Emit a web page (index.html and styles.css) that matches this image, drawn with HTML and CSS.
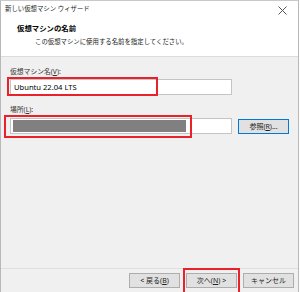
FILE: index.html
```html
<!DOCTYPE html>
<html lang="ja">
<head>
<meta charset="UTF-8" />
<title>新しい仮想マシン ウィザード</title>
<link rel="stylesheet" href="styles.css">
</head>
<body>
<div class="window">
  <!-- ------ HEADER (white) ------ -->
  <header class="header">
    <div class="titlebar">
      <span class="title">新しい仮想マシン ウィザード</span>
      <svg class="close" width="9" height="9" viewBox="0 0 9 9">
        <path d="M0.5 0.5 L8.5 8.5 M8.5 0.5 L0.5 8.5" stroke="#555" stroke-width="1" fill="none"/>
      </svg>
    </div>
    <h1 class="heading">仮想マシンの名前</h1>
    <p class="sub">この仮想マシンに使用する名前を指定してください。</p>
  </header>

  <!-- ------ FORM ------ -->
  <main class="content">
    <label class="label">仮想マシン名(<u>V</u>):</label>
    <div class="field">
      <div class="input">Ubuntu 22.04 LTS</div>
      <span class="mark mark-name"></span>
    </div>

    <label class="label label-loc">場所(<u>L</u>):</label>
    <div class="field row">
      <div class="input input-loc"><span class="redact"></span></div>
      <button class="btn btn-focus">参照(<u>R</u>)...</button>
      <span class="mark mark-loc"></span>
    </div>
  </main>

  <!-- ------ FOOTER BUTTONS ------ -->
  <footer class="footer">
    <button class="btn">&lt; 戻る(<u>B</u>)</button>
    <div class="field">
      <button class="btn">次へ(<u>N</u>) &gt;</button>
      <span class="mark mark-next"></span>
    </div>
    <button class="btn">キャンセル</button>
  </footer>
</div>
</body>
</html>
```

FILE: styles.css
```css
/* ---------- Root ---------- */
:root {
  --font-ui: "Noto Sans", "Noto Sans CJK JP", sans-serif;
  --red: #e8212b;
  --panel: #f0f0f0;
}

body {
  margin: 0;
  font-family: var(--font-ui);
  color: #000;
  background: #fff;
}

/* ---------- Window frame ---------- */
.window {
  width: 299px;
  height: 292px;
  box-sizing: border-box;
  border-top: 1px solid #c9c9c9;
  border-left: 1px solid #b8b8b8;
  border-right: 1px solid #b8b8b8;
  background: var(--panel);
  display: flex;
  flex-direction: column;
  overflow: hidden;
}

/* ---------- Header ---------- */
.header {
  background: #fff;
  height: 55px;
  border-bottom: 1px solid #dcdcdc;
  flex: none;
}
.titlebar {
  height: 16px;
  display: flex;
  align-items: center;
  justify-content: space-between;
  padding: 0 11px 0 4px;
}
.title { font-size: 6.4px; line-height: 10px; color: #222; }
.close { display: block; flex: none; margin-top: 3px; }

.heading {
  margin: 6px 0 0 16px;
  font-size: 7.4px;
  line-height: 10px;
  font-weight: 700;
}
.sub {
  margin: 4px 0 0 34px;
  font-size: 6.4px;
  line-height: 10px;
  color: #222;
}

/* ---------- Form ---------- */
.content {
  flex: 1;
  padding: 10px 0 0 9px;
}
.label {
  display: block;
  font-size: 6.8px;
  line-height: 10px;
  color: #333;
}
.label-loc { margin-top: 10px; }

.field { position: relative; margin-top: 2px; }
.row {
  display: flex;
  align-items: flex-end;
  gap: 6px;
  margin-top: 3px;
}

.input {
  width: 222px;
  height: 16px;
  box-sizing: border-box;
  background: #fff;
  border: 1px solid #c4c4c4;
  padding-left: 3px;
  font-size: 7.6px;
  line-height: 14px;
}
.input-loc {
  padding: 1px 0 1px 2px;
  display: flex;
}
.redact {
  width: 173px;
  background: #808080;
}

/* ---------- Buttons ---------- */
.btn {
  display: block;
  width: 51px;
  height: 15px;
  box-sizing: border-box;
  padding: 0;
  background: #e1e1e1;
  border: 1px solid #adadad;
  font-family: var(--font-ui);
  font-size: 7px;
  line-height: 12px;
  color: #222;
}
.btn-focus { border-color: #0078d7; }

/* ---------- Red annotation boxes (drawn over the form) ---------- */
.mark {
  position: absolute;
  border: 2px solid var(--red);
  box-sizing: border-box;
  pointer-events: none;
}
.mark-name { left: -3px; top: -2px; width: 151px; height: 19px; }
.mark-loc  { left: -6px; top: -3px; width: 188px; height: 23px; }
.mark-next { left: -3px; top: -5px; width: 57px; height: 30px; }

/* ---------- Footer ---------- */
.footer {
  flex: none;
  height: 24px;
  box-sizing: border-box;
  border-top: 1px solid #dfdfdf;
  display: flex;
  justify-content: flex-end;
  align-items: flex-start;
  gap: 6px;
  padding: 4px 4px 0 0;
}
.footer .field { margin-top: 0; }
```
